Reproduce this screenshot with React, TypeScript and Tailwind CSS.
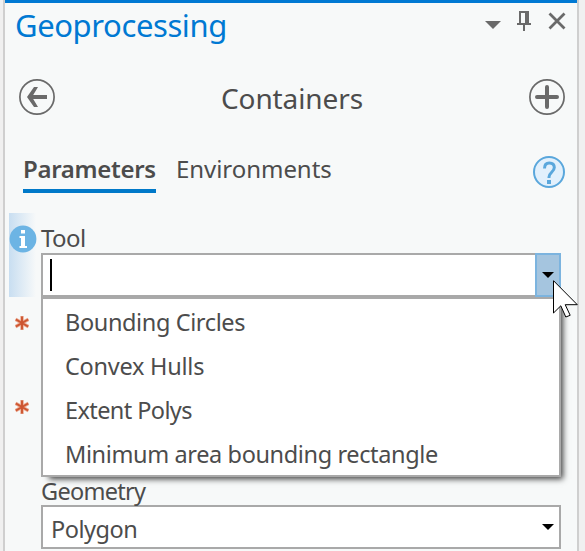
import React from "react";

const options = [
  { label: "Bounding Circles", tracking: "tracking-[-0.38px]" },
  { label: "Convex Hulls", tracking: "tracking-[-0.25px]" },
  { label: "Extent Polys", tracking: "tracking-[-0.6px]" },
  { label: "Minimum area bounding rectangle", tracking: "tracking-[-0.38px]" },
];

function Caret() {
  return (
    <svg width="12" height="6" viewBox="0 0 12 6" className="shrink-0">
      <path d="M0 0h12L6 6z" fill="#000" />
    </svg>
  );
}

function Required() {
  return (
    <svg width="14" height="14" viewBox="0 0 14 14">
      <path d="M7 0v14M0.500 3.200l13 7.600M0.500 10.800l13-7.600" stroke="#e9a58c" strokeWidth="3.400" />
      <path d="M7 0.500v13M1 3.500l12 7M1 10.500l12-7" stroke="#cd5530" strokeWidth="1.900" />
    </svg>
  );
}

function Header() {
  return (
    <header className="flex h-11 justify-between pl-[10px] pr-[11px]">
      <h1 className="text-[31px] leading-[44px] tracking-[-0.4px] text-[#0079d3]">Geoprocessing</h1>
      <div className="flex pt-2 text-[#6a6a6a]">
        <svg width="16" height="8" viewBox="0 0 16 8" className="mt-[10px]">
          <path d="M0 0h16L8 8z" fill="currentColor" />
        </svg>
        <svg width="14" height="20" viewBox="0 0 14 20" className="ml-4">
          <path d="M2 0h10v12h2v2H8v6H6v-6H0v-2h2zM4 2v10h4V2z" fill="currentColor" fillRule="evenodd" />
        </svg>
        <svg width="18" height="18" viewBox="0 0 18 18" className="ml-[17px] mt-[1px]">
          <path d="M1.500 1.500l15 15M16.500 1.500l-15 15" stroke="currentColor" strokeWidth="2.800" />
        </svg>
      </div>
    </header>
  );
}

function Navigation() {
  return (
    <div className="flex h-[101px] items-center justify-between pl-[14px] pr-3 text-[#6a6a6a]">
      <svg width="36" height="36" viewBox="0 0 36 36" fill="none" stroke="currentColor" className="mb-[1px]">
        <circle cx="18" cy="18" r="17.100" strokeWidth="1.700" />
        <path d="M28 18H10" strokeWidth="4" />
        <path d="M19 8h-4L8 18l7 10h4l-6-10z" fill="currentColor" stroke="none" />
      </svg>
      <h2 className="text-[28px] leading-10 tracking-[-0.1px] text-[#4c4c4c]">Containers</h2>
      <svg width="36" height="36" viewBox="0 0 36 36" fill="none" stroke="currentColor" className="mb-[1px]">
        <circle cx="18" cy="18" r="17.100" strokeWidth="1.700" />
        <path d="M18 8v20M8 18h20" strokeWidth="4" strokeLinecap="round" />
      </svg>
    </div>
  );
}

function Tabs() {
  return (
    <nav className="flex h-[45px] pl-[18px] pr-3">
      <span className="w-[133px] whitespace-nowrap border-b-4 border-[#0079c9] text-[24px] font-semibold leading-[41px] tracking-[-0.3px]">
        Parameters
      </span>
      <span className="ml-5 text-[24px] leading-[41px] tracking-[-0.05px]">Environments</span>
      <svg width="32" height="32" viewBox="0 0 32 32" fill="none" className="ml-auto mt-2">
        <circle cx="16" cy="16" r="15" fill="#e2f0fc" stroke="#5aa7dc" strokeWidth="2" />
        <path d="M11.500 12.500c0-3.800 1.700-5.500 4.800-5.500 3.200 0 5 1.800 5 4.500 0 4.500-5.300 5-5.300 9.500v1" stroke="#5aa7dc" strokeWidth="3" />
        <path d="M14 24h4v4h-4z" fill="#5aa7dc" />
      </svg>
    </nav>
  );
}

function Dropdown() {
  return (
    <ul className="absolute left-0 top-[44px] z-10 w-[520px] border-2 border-[#a9a9a9] bg-white text-[23.5px] shadow-[5px_5px_6px_-3px_rgba(0,0,0,0.75)]">
      {options.map((o) => (
        <li key={o.label} className={"h-11 whitespace-nowrap pl-[22px] pt-[1px] leading-[44px] " + o.tracking}>
          {o.label}
        </li>
      ))}
    </ul>
  );
}

export default function App() {
  return (
    <div className="flex h-[551px] w-[585px] overflow-hidden bg-[#f0f0f0] pl-[3px] font-['Noto_Sans','Open_Sans',sans-serif] text-[24px] text-[#4c4c4c]">
      <main className="w-[576px] shrink-0 border-x-2 border-[#cfcfcf] bg-[#f7f9f9]">
        <div className="h-[3px] bg-[#0079d3]" />
        <Header />
        <Navigation />
        <Tabs />
        <div className="mt-5 flex">
          <aside className="w-9 shrink-0 pl-1">
            <div className="flex h-[84px] w-[27px] bg-linear-to-r from-[#c8def1] to-[#f7f9f9] pt-3">
              <svg width="28" height="28" viewBox="0 0 28 28" className="shrink-0">
                <circle cx="14" cy="14" r="13.400" fill="#6cb4e4" />
                <path d="M12 5h4v3.500h-4zM10.500 11H16v10h2v2h-7.500v-2H12v-8h-1.500z" fill="#fff" />
              </svg>
            </div>
            <div className="flex flex-col gap-[70px] pl-[6px] pt-[19px]">
              <Required />
              <Required />
            </div>
          </aside>
          <section className="w-[520px] shrink-0">
            <div className="pt-[9px] leading-[31px] tracking-[-0.6px]">Tool</div>
            <div className="relative h-[44px]">
              <div className="flex h-[44px] border-2 border-[#a9a9a9] bg-white">
                <div className="ml-[7px] mt-1 h-8 w-[2px] bg-black" />
                <div className="-my-[2px] -mr-[2px] ml-auto flex w-[26px] items-center justify-center border-2 border-[#7cb4df] bg-[#a5c5df]">
                  <Caret />
                </div>
              </div>
              <Dropdown />
              <svg width="26" height="39" viewBox="0 0 26 39" className="absolute left-[512px] top-[27px] z-20">
                <path d="M0.500 0.700v32.300l7.300-7.200 5 11.200 4.400-1.700-5-10.600h12.100z" fill="#fff" stroke="#000" strokeWidth="1" />
              </svg>
            </div>
            <div className="mt-[180px] h-7 text-[23.5px] leading-[28px] tracking-[-0.7px]">Geometry</div>
            <div className="flex h-[44px] items-center justify-between border-2 border-[#a9a9a9] bg-white pl-2 pr-[5px]">
              <span className="pt-[4px] text-[23.5px] leading-9 tracking-[-0.5px]">Polygon</span>
              <Caret />
            </div>
          </section>
        </div>
      </main>
    </div>
  );
}
